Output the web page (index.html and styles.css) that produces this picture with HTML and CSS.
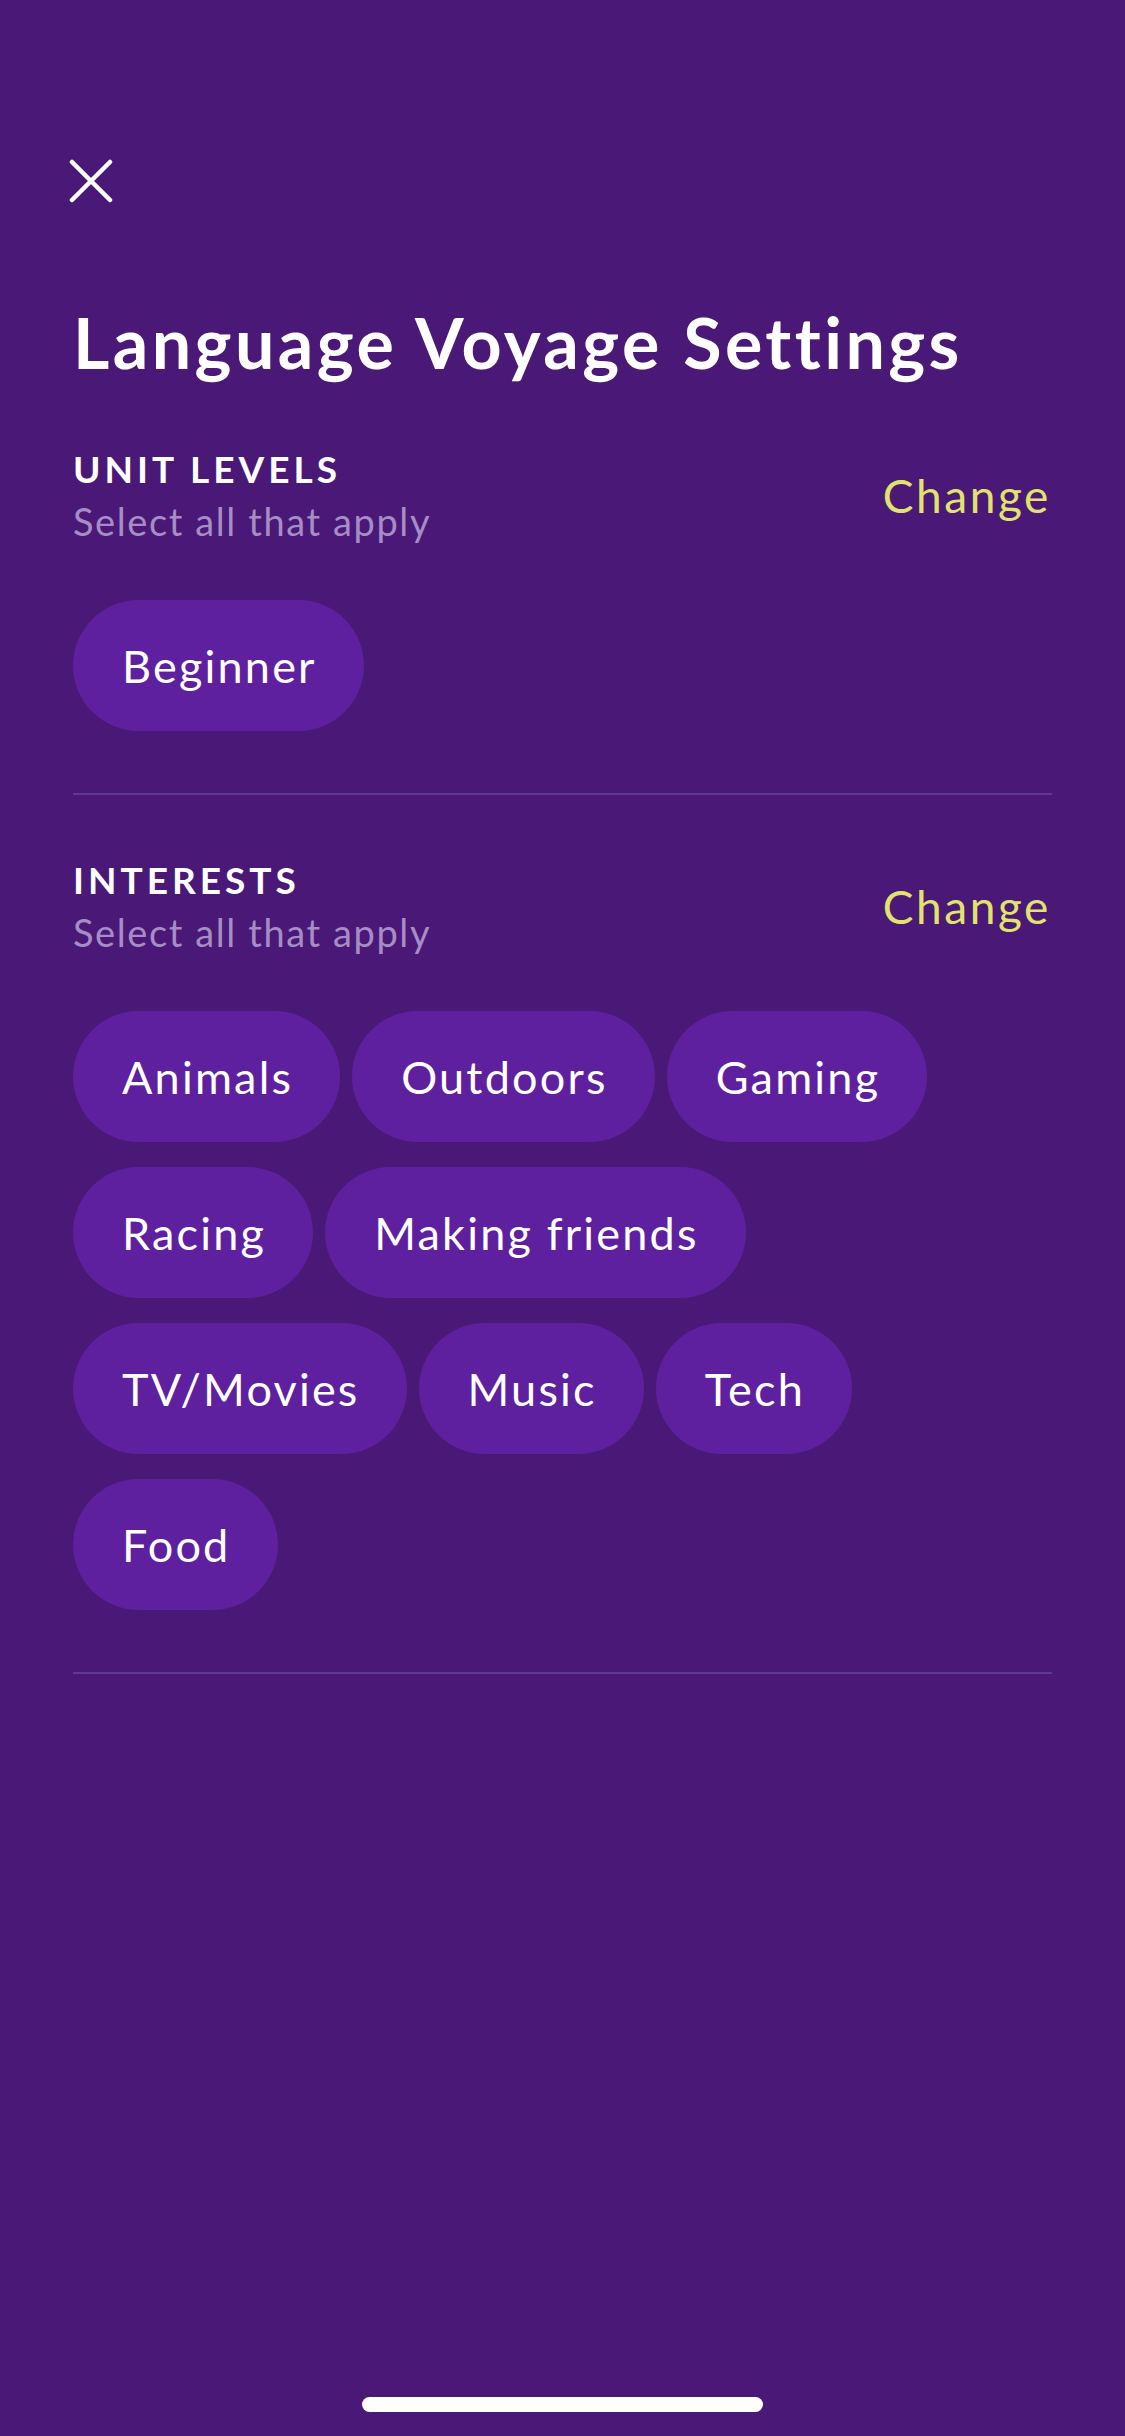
FILE: index.html
```html
<!DOCTYPE html>
<html lang="en">
<head>
<meta charset="utf-8">
<title>Language Voyage Settings</title>
<link rel="stylesheet" href="styles.css">
</head>
<body>
<main class="screen">
  <button class="close" aria-label="Close">
    <svg viewBox="0 0 44 44" width="44" height="44">
      <path d="M3 3 L41 41 M41 3 L3 41" stroke="#ffffff" stroke-width="4.5" stroke-linecap="round" fill="none"/>
    </svg>
  </button>

  <h1 class="title">Language Voyage Settings</h1>

  <section class="section">
    <div class="section-head">
      <div class="section-text">
        <h2 class="section-title">UNIT LEVELS</h2>
        <p class="section-sub">Select all that apply</p>
      </div>
      <a class="change">Change</a>
    </div>
    <div class="chips">
      <span class="chip">Beginner</span>
    </div>
  </section>

  <hr class="divider">

  <section class="section">
    <div class="section-head">
      <div class="section-text">
        <h2 class="section-title">INTERESTS</h2>
        <p class="section-sub">Select all that apply</p>
      </div>
      <a class="change">Change</a>
    </div>
    <div class="chips">
      <span class="chip">Animals</span>
      <span class="chip">Outdoors</span>
      <span class="chip">Gaming</span>
      <span class="chip">Racing</span>
      <span class="chip">Making friends</span>
      <span class="chip">TV/Movies</span>
      <span class="chip">Music</span>
      <span class="chip">Tech</span>
      <span class="chip">Food</span>
    </div>
  </section>

  <hr class="divider">
</main>
<div class="home-indicator"></div>
</body>
</html>
```

FILE: styles.css
```css
html, body {
  margin: 0;
  padding: 0;
}

body {
  background: #4a1876;
  width: 1125px;
  height: 2436px;
  position: relative;
  overflow: hidden;
  font-family: Lato, "Noto Sans", sans-serif;
  font-variant-ligatures: none;
  color: #ffffff;
}

.screen {
  display: flex;
  flex-direction: column;
  padding: 159px 73px 0 73px;
}

.close {
  display: block;
  width: 44px;
  height: 44px;
  padding: 0;
  margin: 0 0 0 -4px;
  border: 0;
  background: none;
}

.close svg {
  display: block;
}

.title {
  margin: 97px 0 0 0;
  font-size: 70px;
  line-height: 84px;
  font-weight: 700;
  letter-spacing: 3.4px;
}

.section {
  display: flex;
  flex-direction: column;
  margin-top: 63px;
}

.section-head {
  display: flex;
  align-items: center;
  justify-content: space-between;
}

.section-title {
  margin: 0;
  font-size: 37px;
  line-height: 44px;
  font-weight: 700;
  letter-spacing: 4px;
}

.section-sub {
  margin: 7px 0 0 0;
  font-size: 38px;
  line-height: 46px;
  letter-spacing: 1.6px;
  color: #a68dc6;
}

.change {
  font-size: 46px;
  line-height: 54px;
  letter-spacing: 2.6px;
  color: #e2e36c;
  margin-right: 1px;
}

.chips {
  display: flex;
  flex-wrap: wrap;
  gap: 25px 12px;
  margin-top: 56px;
}

.chip {
  display: flex;
  align-items: center;
  height: 131px;
  padding: 0 47px 0 49px;
  border-radius: 66px;
  background: #5e209e;
  font-size: 45px;
  letter-spacing: 2.2px;
  box-sizing: border-box;
}

.divider {
  margin: 62px 0 0 0;
  border: 0;
  height: 2px;
  background: #5f3a92;
}

.home-indicator {
  position: absolute;
  left: 362px;
  top: 2397px;
  width: 401px;
  height: 15px;
  border-radius: 8px;
  background: #ffffff;
}
```
